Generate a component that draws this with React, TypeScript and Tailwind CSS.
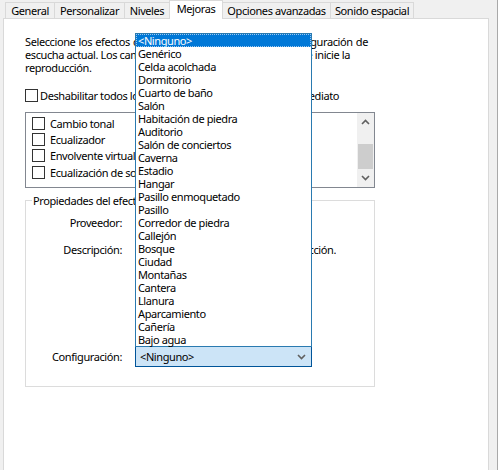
import React from "react";

const reverbs = [
  "<Ninguno>",
  "Genérico",
  "Celda acolchada",
  "Dormitorio",
  "Cuarto de baño",
  "Salón",
  "Habitación de piedra",
  "Auditorio",
  "Salón de conciertos",
  "Caverna",
  "Estadio",
  "Hangar",
  "Pasillo enmoquetado",
  "Pasillo",
  "Corredor de piedra",
  "Callejón",
  "Bosque",
  "Ciudad",
  "Montañas",
  "Cantera",
  "Llanura",
  "Aparcamiento",
  "Cañería",
  "Bajo agua",
];

const tabs = [
  { label: "General", w: "w-[50px]" },
  { label: "Personalizar", w: "w-[71px]" },
  { label: "Niveles", w: "w-[46px]" },
  { label: "Mejoras", w: "w-[54px]", active: true },
  { label: "Opciones avanzadas", w: "w-[109px]" },
  { label: "Sonido espacial", w: "w-[84px]" },
];

const effects = ["Cambio tonal", "Ecualizador", "Envolvente virtual", "Ecualización de sonoridad"];

function CheckBox() {
  return <span className="inline-block w-[13px] h-[13px] border border-[#333333] bg-white shrink-0" />;
}

function Chevron({ up }: { up?: boolean }) {
  return (
    <svg width="9" height="6" viewBox="0 0 9 6" className="block">
      <path
        d={up ? "M1 5 L4.5 1.5 L8 5" : "M1 1 L4.5 4.5 L8 1"}
        fill="none"
        stroke="#606060"
        strokeWidth="1.6"
      />
    </svg>
  );
}

export default function App() {
  return (
    <div className="w-[498px] h-[470px] bg-[#f0f0f0] overflow-hidden border-r border-[#a9a9a9] font-['Noto_Sans',sans-serif] text-[11px] leading-[13px] tracking-[-0.4px] text-black">
      {/* pestañas */}
      <div className="flex items-end h-[19px] pl-[5px]">
        {tabs.map((t, i) => (
          <div
            key={t.label}
            className={
              t.active
                ? `relative z-10 ${t.w} h-[19px] -ml-px bg-white border border-b-0 border-[#d9d9d9] flex justify-center pt-[1px]`
                : `${t.w} h-[17px] ${i === 0 ? "" : "-ml-px"} bg-[#f0f0f0] border border-b-0 border-[#d9d9d9] flex justify-center pt-[1px]`
            }
          >
            {t.label}
          </div>
        ))}
      </div>

      <div className="relative -mt-px ml-[3px] w-[486px] h-[460px] bg-white border border-[#d9d9d9] pl-[21px] pt-[16px]">
        {/* texto */}
        <div className="w-[343px] whitespace-nowrap text-justify [text-align-last:justify]">
          Seleccione los efectos de sonido que se aplicarán a la configuración de
        </div>
        <div className="w-[325px] whitespace-nowrap text-justify [text-align-last:justify]">
          escucha actual. Los cambios se aplicarán la próxima vez que inicie la
        </div>
        <div>reproducción.</div>

        <div className="mt-[15px] w-[314px] flex justify-between items-center h-[13px]">
          <label className="flex items-center gap-[2px]">
            <CheckBox />
            <span>Deshabilitar todos los efectos de sonido</span>
          </label>
          <label className="flex items-center gap-[3px]">
            <CheckBox />
            <span>Modo inmediato</span>
          </label>
        </div>

        {/* lista de efectos */}
        <div className="mt-[10px] w-[350px] h-[76px] border border-[#828790] flex">
          <div className="flex-1 pt-[2px] pl-[6px]">
            {effects.map((e) => (
              <div key={e} className="h-[16.4px] flex items-center gap-[5px] whitespace-nowrap overflow-hidden">
                <CheckBox />
                <span>{e}</span>
              </div>
            ))}
          </div>
          <div className="w-[17px] bg-[#f0f0f0] flex flex-col">
            <div className="h-[17px] flex items-center justify-center">
              <Chevron up />
            </div>
            <div className="mt-[14px] h-[25px] mx-[1px] bg-[#cdcdcd]" />
            <div className="h-[17px] flex items-center justify-center">
              <Chevron />
            </div>
          </div>
        </div>

        {/* propiedades */}
        <fieldset className="mt-[6px] w-[350px] h-[193px] border border-[#dcdcdc]">
          <legend className="ml-[6px] px-[1px]">Propiedades del efecto</legend>
          <div className="grid grid-cols-[96px_1fr] gap-x-[13px] pt-[9px]">
            <div className="text-right">Proveedor:</div>
            <div />
            <div className="text-right mt-[14px]">Descripción:</div>
            <div className="mt-[14px] w-[201px] text-right whitespace-nowrap overflow-hidden">
              Sin efecto de reproducción.
            </div>
            <div className="text-right mt-[90px] self-center">Configuración:</div>
            <div className="mt-[90px] w-[177px] h-[21px] bg-[#cce4f7] border border-[#005499] flex items-center justify-between pl-[4px] pr-[5px]">
              <span>&lt;Ninguno&gt;</span>
              <Chevron />
            </div>
          </div>
        </fieldset>

        {/* lista desplegada */}
        <div className="absolute left-[131px] top-[14px] w-[177px] h-[314px] bg-white border border-[#2a7ab0]">
          {reverbs.map((r, i) => (
            <div
              key={r}
              className={
                i === 0
                  ? "h-[13px] pl-[2px] bg-[#0078d7] text-white outline-1 outline-dotted outline-[#9cc8ef] -outline-offset-1 whitespace-nowrap"
                  : "h-[13px] pl-[2px] whitespace-nowrap"
              }
            >
              {r}
            </div>
          ))}
        </div>
      </div>
    </div>
  );
}
